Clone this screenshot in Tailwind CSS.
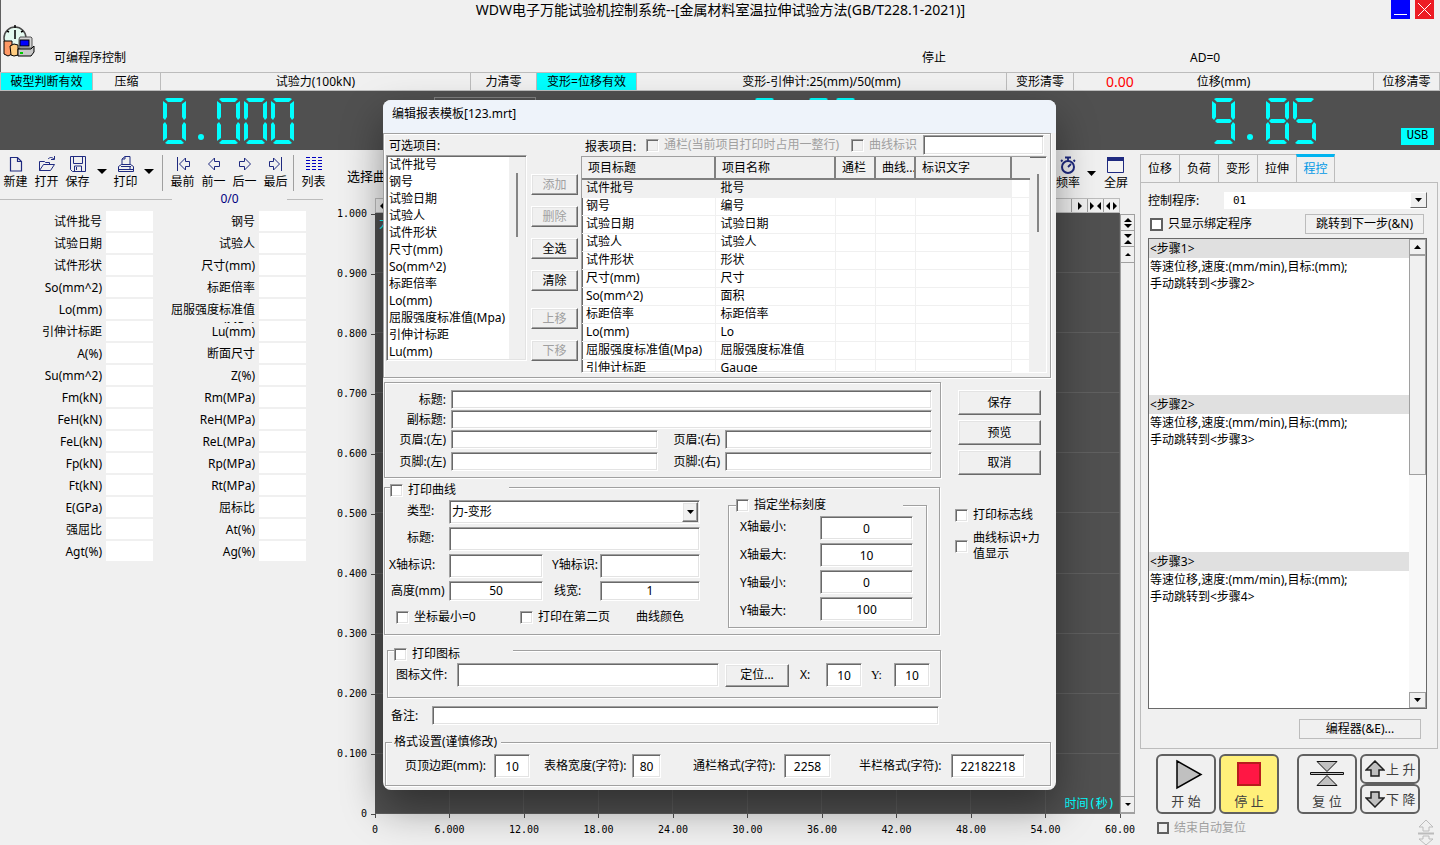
<!DOCTYPE html>
<html lang="zh-CN">
<head>
  <meta charset="UTF-8" />
  <meta name="viewport" content="width=device-width, initial-scale=1.0"/>
  <title>WDW电子万能试验机控制系统</title>
  <script src="https://cdn.jsdelivr.net/npm/@tailwindcss/browser@4"></script>
</head>
<body class="relative flex h-screen flex-col overflow-hidden bg-[#f0f0f0] font-['Noto_Sans','Noto_Sans_CJK_SC',sans-serif] text-xs leading-4 text-black">

  <!-- LED segments and small glyphs -->
  <svg class="hidden">
    <defs>
      <path id="sa" d="M2 1 L4 0 H19 L21 1 L18 4 H5 Z"/>
      <path id="sb" d="M23 3 V20 L21 22 L19 19 V6 Z"/>
      <path id="sc" d="M23 26 V43 L19 40 V27 L21 24 Z"/>
      <path id="sd" d="M2 45 L5 42 H18 L21 45 L19 46 H4 Z"/>
      <path id="se" d="M0 26 V43 L4 40 V27 L2 24 Z"/>
      <path id="sf" d="M0 3 V20 L2 22 L4 19 V6 Z"/>
      <path id="sg" d="M3 23 L5 21 H18 L20 23 L18 25 H5 Z"/>
      <g id="d0"><use href="#sa"/><use href="#sb"/><use href="#sc"/><use href="#sd"/><use href="#se"/><use href="#sf"/></g>
      <g id="d5"><use href="#sa"/><use href="#sf"/><use href="#sg"/><use href="#sc"/><use href="#sd"/></g>
      <g id="d8"><use href="#d0"/><use href="#sg"/></g>
      <g id="d9"><use href="#sa"/><use href="#sb"/><use href="#sc"/><use href="#sd"/><use href="#sf"/><use href="#sg"/></g>
      <circle id="dp" cx="11" cy="39" r="3"/>
    </defs>
  </svg>

  <!-- Title -->
  <header class="relative h-[72px] shrink-0 border-l border-[#606060]">
    <h1 class="pt-px text-center text-sm leading-[18px]">WDW电子万能试验机控制系统--[金属材料室温拉伸试验方法(GB/T228.1-2021)]</h1>
    <div class="absolute top-0 right-[6px] flex gap-[5px]">
      <button aria-label="最小化" class="h-[19px] w-[19px] bg-[#0000ff]"><svg width="19" height="19"><path d="M3 14.5h13" stroke="#fff"/></svg></button>
      <button aria-label="关闭" class="h-[19px] w-[19px] bg-[#ed1c24]"><svg width="19" height="19"><path d="M3 3l13 13M16 3L3 16" stroke="#fff"/></svg></button>
    </div>
    <div class="flex items-end pt-[6px] pl-[2px]">
      <svg width="32" height="32" viewBox="0 0 32 32">
        <circle cx="12" cy="13" r="11" fill="#e4faf0" stroke="#4a4a4a" stroke-width="1.5"/>
        <path d="M12 0v3M12 5v9M4 6l2 1M20 6l-2 1" stroke="#000" stroke-width="1.5"/>
        <path d="M1 16h8v13l-4 2-4-2z" fill="#ff9966" stroke="#000"/>
        <path d="M7 21l4-2 4 1v10l-4 1-3-1z" fill="#ffcc80" stroke="#000"/>
        <path d="M17 12h11l1 1v10H16V14z" fill="#d4d4d4" stroke="#555"/>
        <rect x="17" y="15" width="9" height="6" fill="#00f" stroke="#000"/>
        <path d="M15 24h13l3-3v6l-3 4H15z" fill="#c8c8c8" stroke="#000"/>
        <path d="M17 28h3" stroke="#0c0" stroke-width="2"/>
      </svg>
      <div class="-mb-[9px] flex grow items-end pl-[19px]">
        <span class="grow-[868] basis-0">可编程序控制</span>
        <span class="grow-[268] basis-0">停止</span>
        <span class="grow-[250] basis-0">AD=0</span>
      </div>
    </div>
  </header>

  <!-- Status row -->
  <div class="grid h-[19px] shrink-0 grid-cols-[93px_68px_310fr_66px_100px_370fr_67px_300fr_66px] border-y border-[#bcbcbc] text-center leading-[17px] [&>*]:border-r [&>*]:border-[#bcbcbc]">
    <button class="border-l bg-[#00ffff]">破型判断有效</button>
    <button>压缩</button>
    <div>试验力(100kN)</div>
    <button>力清零</button>
    <button class="bg-[#00ffff]">变形=位移有效</button>
    <div>变形-引伸计:25(mm)/50(mm)</div>
    <button>变形清零</button>
    <div class="grid grid-cols-3"><span class="pr-2 text-sm leading-[17px] text-[#ff0000]">0.00</span><span>位移(mm)</span></div>
    <button>位移清零</button>
  </div>

  <!-- LED displays -->
  <div class="flex h-[59px] shrink-0 bg-[#505050] pt-[7px]">
    <div class="flex w-[434px] shrink-0 pl-[163px]">
      <svg width="132" height="46" fill="#00ffff"><use href="#d0"/><use href="#dp" x="27"/><use href="#d0" x="54"/><use href="#d0" x="81"/><use href="#d0" x="108"/></svg>
    </div>
    <div class="-mt-px h-8 w-[102px] shrink-0 border border-[#808080]"></div>
    <div class="flex grow justify-center">
      <svg width="105" height="46" fill="#00ffff"><use href="#d0"/><use href="#dp" x="27"/><use href="#d0" x="54"/><use href="#d0" x="81"/></svg>
    </div>
    <div class="flex w-[365px] shrink-0 justify-between pl-[137px] pr-[6px]">
      <svg width="104" height="46" fill="#00ffff"><use href="#d9"/><use href="#dp" x="27"/><use href="#d8" x="54"/><use href="#d5" x="81"/></svg>
      <span class="mt-[30px] h-[17px] w-[33px] bg-[#00ffff] text-center font-['Liberation_Mono',monospace] text-xs leading-4">USB</span>
    </div>
  </div>

  <main class="flex min-h-0 grow">
    <!-- Sample panel -->
    <section class="w-[333px] shrink-0">
      <div class="flex h-[42px] items-start pt-[5px] [&>button]:flex [&>button]:w-[31px] [&>button]:flex-col [&>button]:items-center [&>button]:gap-px [&>button]:whitespace-nowrap [&_svg]:fill-none [&_svg]:stroke-[#1f2a80]">
        <button><svg width="18" height="18"><path d="M3.500 2.500h7l4 4v9.500h-11zM10.500 2.500v4h4" stroke-width="1.200"/></svg>新建</button>
        <button><svg width="18" height="18"><path d="M1.500 15.500v-9h5l1 1h4v2M1.500 15.500l4-6h11l-4 6zM10 4c2-2 4-2 6 0M16.500 1v3.500H13"/></svg>打开</button>
        <button><svg width="18" height="18"><path d="M1.500 1.500h15v15h-13l-2-2zM4.500 1.500v7h9v-7M5.500 16v-5h7v5M7.500 12v3" /></svg>保存</button>
        <button aria-label="保存选项" class="!w-[17px] pt-[14px]"><svg width="10" height="6"><path d="M0 0h10L5 5z" fill="#000" stroke="none"/></svg></button>
        <button><svg width="18" height="18"><path d="M5 10V4l3-2.500h5V10M8 1.500V4H5M1.500 16.500v-5l3-2h9l3 2v5zM4 11.500h10M1.500 14.500h15M12 13h2"/></svg>打印</button>
        <button aria-label="打印选项" class="!w-4 pt-[14px]"><svg width="10" height="6"><path d="M0 0h10L5 5z" fill="#000" stroke="none"/></svg></button>
        <span class="mr-[4px] ml-[5px] h-9 w-px bg-[#a0a0a0]"></span>
        <button><svg width="16" height="18"><path d="M2.500 2v14M4.500 9l6-6v3.500h4v5h-4V15z"/></svg>最前</button>
        <button><svg width="16" height="18"><path d="M2.500 9l6-6v3.500h5v5h-5V15z"/></svg>前一</button>
        <button><svg width="16" height="18"><path d="M13.500 9l-6-6v3.500h-5v5h5V15z"/></svg>后一</button>
        <button><svg width="16" height="18"><path d="M13.500 2v14M11.500 9l-6-6v3.500h-4v5h4V15z"/></svg>最后</button>
        <span class="mr-[4px] ml-[2px] h-9 w-px bg-[#a0a0a0]"></span>
        <button><svg width="16" height="18"><path d="M0 2.500h16M0 5.500h16M0 8.500h16M0 11.500h16M0 14.500h16" stroke="#0000c0" stroke-dasharray="4 2"/></svg>列表</button>
      </div>
      <div class="flex h-[14px] items-center text-[#000080]">
        <span class="h-px w-[172px] bg-[#bcbcbc]"></span><span class="w-[115px] text-center">0/0</span><span class="h-px w-9 bg-[#bcbcbc]"></span>
      </div>
      <div id="fields" class="mt-[5px] grid w-[306px] grid-cols-2"></div>
    </section>

    <!-- Curve -->
    <section class="flex min-w-0 grow flex-col">
      <div class="flex h-[48px] items-start justify-between pl-[14px]">
        <span class="pt-[18px] text-[13px]">选择曲线</span>
        <div class="flex pt-[6px] pr-[7px]">
          <button class="flex flex-col items-center"><svg width="18" height="19" fill="none" stroke="#1f2a80" stroke-width="2"><circle cx="9" cy="11" r="6"/><path d="M6 1.500h6M9 2v3M14.500 4l1.500 1.500M3.500 4L2 5.500M9 11l3-3" stroke-width="1.800"/></svg><span>频率</span></button>
          <button aria-label="频率选项" class="mt-[15px] w-6 self-start pl-[7px]"><svg width="9" height="5"><path d="M0 0h9L4.500 5z"/></svg></button>
          <button class="flex flex-col items-center"><svg width="17" height="19"><path d="M.5 1.500h16v15H.5z" fill="#f4f4f4" stroke="#1f2a80"/><path d="M0 1h17v4H0z" fill="#1f2a80"/></svg><span>全屏</span></button>
        </div>
      </div>
      <div class="flex min-h-0 grow">
        <div class="flex w-[42px] shrink-0 flex-col pt-4 pb-[31px]">
          <div id="yaxis" class="flex grow flex-col justify-between font-['DejaVu_Sans_Mono',monospace] text-[10px]"></div>
        </div>
        <div class="flex min-w-0 grow flex-col">
          <div class="flex h-[15px] border border-[#bcbcbc] pl-[3px]">
            <button aria-label="左移"><svg width="6" height="8"><path d="M5 0v8L1 4z"/></svg></button>
            <div class="ml-auto flex [&>button]:w-4 [&>button]:border-l [&>button]:border-[#a0a0a0] [&>button]:pl-[2px]">
              <button aria-label="右移"><svg width="12" height="8"><path d="M4 0v8l4-4z"/></svg></button>
              <button aria-label="压缩横轴"><svg width="12" height="8"><path d="M0 0v8l4-4zM11 0v8L7 4z"/></svg></button>
              <button aria-label="展开横轴"><svg width="12" height="8"><path d="M4 0v8L0 4zM7 0v8l4-4z"/></svg></button>
            </div>
          </div>
          <div class="relative grow bg-[#505050]">
            <div class="absolute inset-0 grid grid-cols-10 [&>i]:border-r [&>i]:border-[#5c5c5c]"><i></i><i></i><i></i><i></i><i></i><i></i><i></i><i></i><i></i><i></i></div>
            <div class="absolute inset-0 grid grid-rows-10 [&>i]:border-b [&>i]:border-[#606060]"><i></i><i></i><i></i><i></i><i></i><i></i><i></i><i></i><i></i><i></i></div>
            <span class="absolute top-[3px] left-[4px] text-[#00ffff]">力(kN)</span>
            <span class="absolute right-[5px] bottom-[2px] font-['DejaVu_Sans_Mono','Noto_Sans_CJK_SC',monospace] text-[#00ffff]">时间(秒)</span>
          </div>
          <div id="xaxis" class="flex h-[31px] justify-between font-['DejaVu_Sans_Mono',monospace] text-[10px]"></div>
        </div>
        <div class="mt-[16px] mb-[31px] flex w-[15px] shrink-0 flex-col border border-[#a0a0a0] [&>button]:flex [&>button]:h-4 [&>button]:shrink-0 [&>button]:items-center [&>button]:justify-center [&>button]:border-b [&>button]:border-[#a0a0a0]">
          <button aria-label="展开纵轴"><svg width="8" height="12"><path d="M0 5l4-4 4 4zM0 7h8l-4 4z"/></svg></button>
          <button aria-label="压缩纵轴"><svg width="8" height="12"><path d="M0 1h8L4 5zM0 11l4-4 4 4z"/></svg></button>
          <button aria-label="上移"><svg width="6" height="4"><path d="M0 3l3-3 3 3z"/></svg></button>
          <div class="grow border-b border-[#a0a0a0]"></div>
          <button aria-label="下移"><svg width="6" height="4"><path d="M0 0h6L3 3z"/></svg></button>
        </div>
      </div>
    </section>

    <!-- Program control -->
    <section class="flex w-[305px] shrink-0 flex-col pt-[4px] pr-[2px] pl-[5px]">
      <nav class="flex h-[28px] items-stretch [&>button]:w-[39px] [&>button]:border-t [&>button]:border-l [&>button]:border-[#bcbcbc]">
        <button>位移</button><button>负荷</button><button>变形</button><button>拉伸</button>
        <button class="-mb-px border-r !border-t-[3px] !border-t-[#00b4f0] bg-[#f0f0f0] pb-[3px] text-[#0099e6]">程控</button>
      </nav>
      <div class="flex min-h-0 grow flex-col border border-[#bcbcbc] pt-[9px] pr-[10px] pb-[9px] pl-[7px]">
        <div class="flex items-center">
          <label for="prog" class="w-[76px]">控制程序:</label>
          <div class="relative grow">
            <select id="prog" class="block h-[17px] w-full appearance-none bg-white pl-[9px] font-['DejaVu_Sans_Mono',monospace] text-[11px] leading-4"><option>01</option></select>
            <span class="pointer-events-none absolute top-0 right-0 flex h-[16px] w-[17px] items-center justify-center border border-t-white border-r-[#696969] border-b-[#696969] border-l-white bg-[#f0f0f0]"><svg width="7" height="4"><path d="M0 0h7L3.500 4z"/></svg></span>
          </div>
        </div>
        <div class="mt-[5px] flex h-5 items-center pr-[3px] pl-[2px]">
          <label class="flex grow items-center gap-[5px]"><input type="checkbox" class="h-[13px] w-[13px] appearance-none border-2 border-[#606060] bg-white" />只显示绑定程序</label>
          <button class="h-5 w-[119px] border border-[#bcbcbc]">跳转到下一步(&amp;N)</button>
        </div>
        <div class="mt-[4px] flex min-h-0 grow border border-[#696969] bg-white">
          <div id="steps" class="flex min-w-0 grow flex-col overflow-hidden"></div>
          <div class="flex w-[17px] shrink-0 flex-col bg-[#f8f8f8] [&>button]:flex [&>button]:h-4 [&>button]:items-center [&>button]:justify-center [&>button]:border [&>button]:border-[#a0a0a0] [&>button]:bg-[#f0f0f0]">
            <button aria-label="向上"><svg width="7" height="4"><path d="M0 4l3.500-4L7 4z"/></svg></button>
            <div class="h-[47%] border border-[#a0a0a0] bg-[#f0f0f0]"></div>
            <div class="grow"></div>
            <button aria-label="向下"><svg width="7" height="4"><path d="M0 0h7L3.500 4z"/></svg></button>
          </div>
        </div>
        <button class="mt-[10px] mr-[6px] h-5 w-[122px] self-end border border-[#bcbcbc]">编程器(&amp;E)...</button>
      </div>

      <!-- Machine buttons -->
      <div class="mt-[5px] flex h-[60px] pl-[16px] text-[13px] text-[#404040] [&_button]:rounded-md [&_button]:border-2 [&_button]:border-[#606060]">
        <button class="flex w-[60px] flex-col items-center pt-[2px]"><svg width="30" height="32" class="ml-1"><path d="M4 3l24 13.500L4 30z" fill="#c0c0c0" stroke="#000" stroke-width="1.500"/></svg><span class="mt-[3px]">开 始</span></button>
        <button class="ml-[3px] flex w-[60px] flex-col items-center bg-[#fff07a] pt-[2px]"><svg width="30" height="32"><path d="M4 5h22v22H4z" fill="#ff1744" stroke="#b71c1c" stroke-width="2"/></svg><span class="mt-[3px]">停 止</span></button>
        <button class="ml-[18px] flex w-[60px] flex-col items-center pt-[2px]"><svg width="36" height="32" fill="#c0c0c0" stroke="#101010"><path d="M8 3.500h20l-10 10zM8 27.500h20l-10-10zM1.500 14.500h33v2h-33z"/></svg><span class="mt-[3px]">复 位</span></button>
        <div class="ml-[3px] flex flex-col [&>button]:flex [&>button]:h-[30px] [&>button]:w-[60px] [&>button]:items-center [&>button]:gap-px [&>button]:whitespace-nowrap [&>button]:pl-[3px]">
          <button><svg width="20" height="18" class="shrink-0"><path d="M10 1l9 9h-5v6H6v-6H1z" fill="#c0c0c0" stroke="#202020" stroke-width="1.500"/></svg>上 升</button>
          <button><svg width="20" height="18" class="shrink-0"><path d="M10 17l9-9h-5V2H6v6H1z" fill="#c0c0c0" stroke="#202020" stroke-width="1.500"/></svg>下 降</button>
        </div>
      </div>
      <div class="flex h-[31px] justify-between pt-[5px] pr-[3px] pl-[17px]">
        <label class="mt-px flex h-4 items-center gap-[5px] text-[#a0a0a0]"><input type="checkbox" disabled class="h-3 w-3 appearance-none border-2 border-[#606060]" />结束自动复位</label>
        <svg width="18" height="27" fill="none" stroke="#bcbcbc"><path d="M9 1l7 7h-4v4H6V8H2zM9 26l7-6h-4v-3H6v3H2z"/><path d="M1 14.500h16" stroke-width="2"/></svg>
      </div>
    </section>
  </main>

  <!-- Report template dialog -->
  <form role="dialog" aria-label="编辑报表模板" class="absolute top-[100px] left-[calc(50%-337px)] w-[673px] rounded-lg bg-[#f0f0f0] pb-[4px] shadow-[0_18px_40px_rgba(0,0,0,0.4)]
    [&_.inp]:min-w-0 [&_.inp]:border [&_.inp]:border-t-[#a0a0a0] [&_.inp]:border-l-[#a0a0a0] [&_.inp]:border-r-white [&_.inp]:border-b-white [&_.inp]:bg-white [&_.inp]:shadow-[inset_1px_1px_0_#696969,inset_-1px_-1px_0_#e3e3e3]
    [&_.btn]:border [&_.btn]:border-t-white [&_.btn]:border-l-white [&_.btn]:border-r-[#696969] [&_.btn]:border-b-[#696969] [&_.btn]:bg-[#f0f0f0] [&_.btn]:shadow-[inset_-1px_-1px_0_#a0a0a0,inset_1px_1px_0_#e3e3e3] [&_.btn:disabled]:text-[#a0a0a0]
    [&_.chk]:h-[13px] [&_.chk]:w-[13px] [&_.chk]:shrink-0 [&_.chk]:appearance-none [&_.chk]:border [&_.chk]:border-t-[#a0a0a0] [&_.chk]:border-l-[#a0a0a0] [&_.chk]:border-r-white [&_.chk]:border-b-white [&_.chk]:bg-white [&_.chk]:shadow-[inset_1px_1px_0_#696969,inset_-1px_-1px_0_#e3e3e3] [&_.chk:disabled]:bg-[#f0f0f0]
    [&_.grp]:border [&_.grp]:border-[#a0a0a0] [&_.grp]:shadow-[1px_1px_0_#fff,inset_1px_1px_0_#fff]">
    <h2 class="h-[33px] rounded-t-lg bg-[#eef3fa] pt-[6px] pl-[9px]">编辑报表模板[123.mrt]</h2>

    <!-- Items -->
    <div class="grp flex h-[245px] w-[668px] pl-[2px]">
      <div class="w-[141px] pt-[4px]">
        <div class="h-[17px] pl-[3px]">可选项目:</div>
        <div class="inp flex h-[206px]">
          <ul id="avail" class="grow overflow-hidden pl-[2px] leading-[17px] whitespace-nowrap"></ul>
          <div class="my-px mr-px w-4 shrink-0 bg-[#f0f0f0] pt-[16px] pl-[7px]"><div class="h-16 w-[2px] bg-[#858585]"></div></div>
        </div>
      </div>
      <div class="mt-[40px] ml-[4px] flex w-[47px] flex-col gap-[11px] [&>button]:h-[21px]">
        <button type="button" class="btn" disabled>添加</button>
        <button type="button" class="btn" disabled>删除</button>
        <button type="button" class="btn">全选</button>
        <button type="button" class="btn">清除</button>
        <button type="button" class="btn mt-[6px]" disabled>上移</button>
        <button type="button" class="btn" disabled>下移</button>
      </div>
      <div class="ml-[3px] w-[466px]">
        <div class="flex h-[22px] items-center text-[#a0a0a0]">
          <span class="w-[65px] pt-1 pl-[4px] text-black">报表项目:</span>
          <label class="flex w-[205px] items-center gap-[5px] whitespace-nowrap"><input type="checkbox" class="chk" disabled />通栏(当前项目打印时占用一整行)</label>
          <label class="flex w-[72px] items-center gap-[5px]"><input type="checkbox" class="chk" disabled />曲线标识</label>
          <input type="text" aria-label="标识文字" class="inp h-5 w-[121px]" />
        </div>
        <div class="inp flex h-[217px] overflow-hidden">
          <table class="w-[448px] table-fixed border-collapse self-start">
            <thead>
              <tr class="h-[22px] text-left [&>th]:overflow-hidden [&>th]:border-r-2 [&>th]:border-b-2 [&>th]:border-[#808080] [&>th]:bg-[#f0f0f0] [&>th]:pl-[6px] [&>th]:font-normal [&>th]:whitespace-nowrap">
                <th class="w-[133px]">项目标题</th><th class="w-[120px]">项目名称</th><th class="w-[40px]">通栏</th><th class="w-[40px]">曲线...</th><th class="w-[96px]">标识文字</th><th class="!border-r-0"></th>
              </tr>
            </thead>
            <tbody id="items"></tbody>
          </table>
          <div class="mt-px w-4 shrink-0 grow bg-[#f0f0f0] pt-[16px] pl-[7px]"><div class="h-[58px] w-[2px] bg-[#858585]"></div></div>
        </div>
      </div>
    </div>

    <!-- Headings -->
    <div class="mt-[4px] flex">
      <div class="grp ml-px grid h-[96px] w-[557px] grid-cols-[66px_207px_67px_207px] grid-rows-[20px_20px_22px_20px] items-start pt-[7px] [&>input]:h-[19px] [&>label]:pr-[5px] [&>label]:text-right [&>label]:leading-5">
        <label for="t1">标题:</label><input id="t1" type="text" class="inp col-span-3" />
        <label for="t2">副标题:</label><input id="t2" type="text" class="inp col-span-3" />
        <label for="hl">页眉:(左)</label><input id="hl" type="text" class="inp" />
        <label for="hr">页眉:(右)</label><input id="hr" type="text" class="inp" />
        <label for="fl">页脚:(左)</label><input id="fl" type="text" class="inp" />
        <label for="fr">页脚:(右)</label><input id="fr" type="text" class="inp" />
      </div>
      <div class="mt-[8px] ml-[17px] flex w-[83px] flex-col gap-[5px] [&>button]:h-[25px]">
        <button type="button" class="btn">保存</button>
        <button type="button" class="btn">预览</button>
        <button type="button" class="btn">取消</button>
      </div>
    </div>

    <!-- Curve print -->
    <div class="-mt-[2px] flex">
      <fieldset class="grp ml-px h-[159px] w-[556px]">
        <legend class="ml-[5px] h-[22px] w-[119px] pt-[6px]"><label class="flex items-center gap-[5px] bg-[#f0f0f0]"><input type="checkbox" class="chk" />打印曲线</label></legend>
        <div class="flex">
          <div class="flex w-[315px] flex-col gap-[3px] pt-[2px] [&_input[type=text]]:h-6">
            <div class="flex leading-[22px]"><label for="kind" class="w-[64px] pl-[22px]">类型:</label>
              <div class="relative grow">
                <select id="kind" class="inp block h-6 w-full appearance-none pl-[2px]"><option>力-变形</option></select>
                <span class="btn pointer-events-none absolute top-[2px] right-[2px] flex h-5 w-4 items-center justify-center"><svg width="7" height="4"><path d="M0 0h7L3.500 4z"/></svg></span>
              </div>
            </div>
            <div class="flex leading-[22px]"><label for="ct" class="w-[64px] pl-[22px]">标题:</label><input id="ct" type="text" class="inp grow" /></div>
            <div class="flex leading-[22px]"><label for="xn" class="w-[64px] pl-[4px]">X轴标识:</label><input id="xn" type="text" class="inp w-[94px]" /><label for="yn" class="w-[57px] pl-[9px]">Y轴标识:</label><input id="yn" type="text" class="inp w-[100px]" /></div>
            <div class="flex leading-5 [&>input]:!h-5 [&>input]:text-center"><label for="hh" class="w-[64px] pl-[6px] whitespace-nowrap">高度(mm)</label><input id="hh" type="text" value="50" class="inp w-[94px]" /><label for="lw" class="w-[57px] pl-[11px]">线宽:</label><input id="lw" type="text" value="1" class="inp w-[100px]" /></div>
            <div class="flex pt-[5px] pl-[11px]">
              <label class="flex w-[124px] items-center gap-[5px]"><input type="checkbox" class="chk" />坐标最小=0</label>
              <label class="flex w-[116px] items-center gap-[5px]"><input type="checkbox" class="chk" />打印在第二页</label>
              <span>曲线颜色</span>
            </div>
          </div>
          <fieldset class="grp -mt-px ml-[28px] h-[131px] w-[199px]">
            <legend class="ml-[7px] h-4 w-[167px] bg-[#f0f0f0]"><label class="flex items-center gap-[5px]"><input type="checkbox" class="chk" />指定坐标刻度</label></legend>
            <div class="flex">
              <div class="flex w-[91px] flex-col pl-[11px] leading-7"><label for="x0">X轴最小:</label><label for="x1">X轴最大:</label><label for="y0">Y轴最小:</label><label for="y1">Y轴最大:</label></div>
              <div class="flex w-[93px] flex-col gap-[3px] pt-[3px] [&>input]:h-6 [&>input]:text-center">
                <input id="x0" type="text" value="0" class="inp" /><input id="x1" type="text" value="10" class="inp" /><input id="y0" type="text" value="0" class="inp" /><input id="y1" type="text" value="100" class="inp" />
              </div>
            </div>
          </fieldset>
        </div>
      </fieldset>
      <div class="mt-[31px] ml-[15px] flex w-[90px] flex-col gap-[7px]">
        <label class="flex items-center gap-[5px]"><input type="checkbox" class="chk" />打印标志线</label>
        <label class="flex items-center gap-[5px]"><input type="checkbox" class="chk" />曲线标识+力值显示</label>
      </div>
    </div>

    <!-- Logo print -->
    <fieldset class="grp mt-[3px] ml-[4px] h-[60px] w-[554px]">
      <legend class="ml-[6px] h-6 w-[119px] pt-2"><label class="flex items-center gap-[5px] bg-[#f0f0f0]"><input type="checkbox" class="chk" />打印图标</label></legend>
      <div class="flex items-center pt-px [&>input]:h-6">
        <label for="logo" class="w-[69px] pl-[8px]">图标文件:</label><input id="logo" type="text" class="inp w-[262px]" />
        <button type="button" class="btn ml-[6px] h-[23px] w-[64px]">定位...</button>
        <label for="lx" class="w-[37px] pl-[11px]">X:</label><input id="lx" type="text" value="10" class="inp w-9 text-center" />
        <label for="ly" class="w-8 pl-[9px] font-['Liberation_Serif',serif]">Y:</label><input id="ly" type="text" value="10" class="inp w-9 text-center" />
      </div>
    </fieldset>
    <div class="mt-[8px] flex items-center"><label for="memo" class="w-[49px] pl-[8px]">备注:</label><input id="memo" type="text" class="inp h-[19px] w-[507px]" /></div>

    <!-- Format -->
    <fieldset class="grp mt-[9px] ml-[2px] h-[52px] w-[666px]">
      <legend class="ml-[6px] h-4 w-[109px] bg-[#f0f0f0] pl-[2px] whitespace-nowrap">格式设置(谨慎修改)</legend>
      <div class="flex items-center pt-[4px] [&>input]:h-6 [&>input]:text-center [&>label]:whitespace-nowrap">
        <label for="f1" class="w-[108px] pl-[19px]">页顶边距(mm):</label><input id="f1" type="text" value="10" class="inp w-9" />
        <label for="f2" class="w-[102px] pl-[14px]">表格宽度(字符):</label><input id="f2" type="text" value="80" class="inp w-[29px]" />
        <label for="f3" class="w-[123px] pl-[32px]">通栏格式(字符):</label><input id="f3" type="text" value="2258" class="inp w-[47px]" />
        <label for="f4" class="w-[120px] pl-[28px]">半栏格式(字符):</label><input id="f4" type="text" value="22182218" class="inp w-[74px]" />
      </div>
    </fieldset>
  </form>

  <script>
    const fields = ['试件批号', '钢号', '试验日期', '试验人', '试件形状', '尺寸(mm)', 'So(mm^2)', '标距倍率', 'Lo(mm)', '屈服强度标准值(MPa)',
      '引伸计标距', 'Lu(mm)', 'A(%)', '断面尺寸', 'Su(mm^2)', 'Z(%)', 'Fm(kN)', 'Rm(MPa)', 'FeH(kN)', 'ReH(MPa)', 'FeL(kN)', 'ReL(MPa)',
      'Fp(kN)', 'Rp(MPa)', 'Ft(kN)', 'Rt(MPa)', 'E(GPa)', '屈标比', '强屈比', 'At(%)', 'Agt(%)', 'Ag(%)'];
    document.getElementById('fields').innerHTML = fields.map((name, i) => `
      <div class="flex h-[22px] justify-end">
        <label for="v${i}" class="h-6 w-[90px] overflow-hidden pt-[2px] pr-[4px] text-right leading-[17px]">${name}</label>
        <input id="v${i}" type="text" class="h-5 w-[47px] bg-white" />
      </div>`).join('');

    const avail = ['试件批号', '钢号', '试验日期', '试验人', '试件形状', '尺寸(mm)', 'So(mm^2)', '标距倍率', 'Lo(mm)', '屈服强度标准值(Mpa)', '引伸计标距', 'Lu(mm)'];
    document.getElementById('avail').innerHTML = avail.map(name => `<li>${name}</li>`).join('');

    const names = ['批号', '编号', '试验日期', '试验人', '形状', '尺寸', '面积', '标距倍率', 'Lo', '屈服强度标准值', 'Gauge'];
    document.getElementById('items').innerHTML = names.map((name, i) => `
      <tr class="h-[18px] leading-4 whitespace-nowrap [&>td]:border-r [&>td]:border-b [&>td]:border-[#f0f0f0] ${i === 0 ? 'bg-[#f0f0f0]' : ''}">
        <td class="pl-[4px]">${avail[i]}</td><td class="pl-[5px]">${name}</td><td></td><td></td><td></td><td class="bg-white"></td>
      </tr>`).join('');

    const ys = ['1.000', '0.900', '0.800', '0.700', '0.600', '0.500', '0.400', '0.300', '0.200', '0.100', '0'];
    document.getElementById('yaxis').innerHTML = ys.map(v => `
      <div class="flex h-0 items-center justify-end gap-[4px]">${v}<span class="h-px w-[4px] bg-[#505050]"></span></div>`).join('');
    const xs = ['0', '6.000', '12.00', '18.00', '24.00', '30.00', '36.00', '42.00', '48.00', '54.00', '60.00'];
    document.getElementById('xaxis').innerHTML = xs.map(v => `
      <div class="flex w-0 flex-col items-center gap-[4px]"><span class="h-[4px] w-px shrink-0 bg-[#505050]"></span>${v}</div>`).join('');

    document.getElementById('steps').innerHTML = [1, 2, 3].map(n => `
      <div class="grow leading-[17px]">
        <div class="bg-[#e0e0e0] pl-px leading-[19px]">&lt;步骤${n}&gt;</div>
        <p class="pl-px">等速位移,速度:(mm/min),目标:(mm);</p>
        <p class="pl-px">手动跳转到&lt;步骤${n + 1}&gt;</p>
      </div>`).join('');
  </script>
</body>
</html>
